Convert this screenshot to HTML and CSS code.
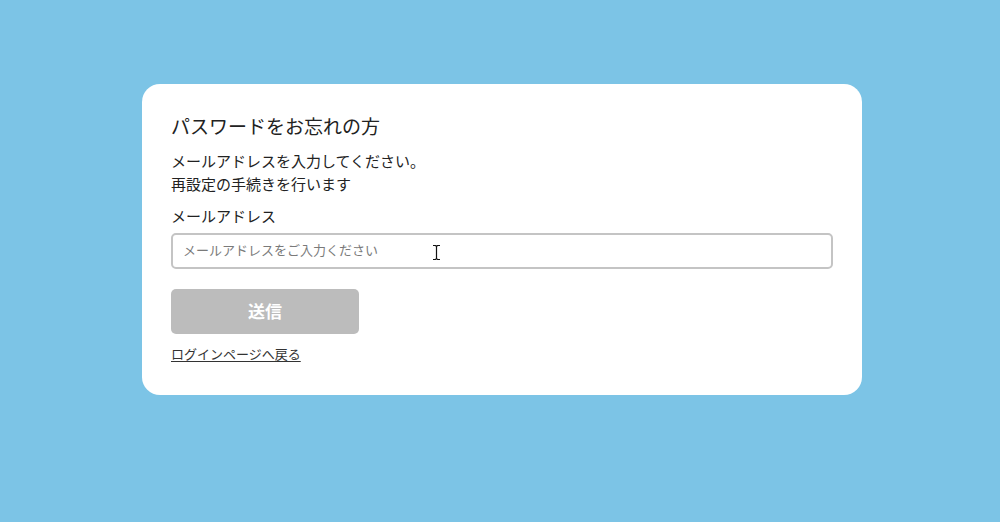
FILE: index.html
```html
<!DOCTYPE html>
<html lang="ja">
<head>
<meta charset="utf-8">
<title>パスワードをお忘れの方</title>
<link rel="stylesheet" href="styles.css">
</head>
<body>
<main class="page">
  <section class="card">
    <h1 class="title">パスワードをお忘れの方</h1>
    <p class="lead">メールアドレスを入力してください。<br>再設定の手続きを行います</p>
    <label class="label" for="email">メールアドレス</label>
    <div class="field">
      <input class="input" id="email" type="email" placeholder="メールアドレスをご入力ください">
      <svg class="cursor" width="9" height="17" viewBox="0 0 9 17" aria-hidden="true">
        <path d="M1 1.5h2.5l1 1 1-1H8M4.5 2.5v12M1 15.5h2.5l1-1 1 1H8" fill="none" stroke="#fff" stroke-width="2.6"/>
        <path d="M1 1.5h2.5l1 1 1-1H8M4.5 2.5v12M1 15.5h2.5l1-1 1 1H8" fill="none" stroke="#111" stroke-width="1.2"/>
      </svg>
    </div>
    <button class="submit" type="button">送信</button>
    <a class="back" href="#">ログインページへ戻る</a>
  </section>
</main>
</body>
</html>
```
FILE: styles.css
```css
* { box-sizing: border-box; }

html, body {
  margin: 0;
  padding: 0;
}

body {
  background: #7cc4e6;
  font-family: "Noto Sans CJK JP", "Noto Sans", sans-serif;
  color: #222;
  width: 1000px;
  height: 522px;
  overflow: hidden;
}

.page {
  display: flex;
  justify-content: center;
  padding: 84px 0 0 4px;
}

.card {
  width: 720px;
  background: #fff;
  border-radius: 18px;
  padding: 28px 29px 31px;
  display: flex;
  flex-direction: column;
  align-items: flex-start;
}

.title {
  margin: 0;
  font-size: 19px;
  line-height: 28px;
  font-weight: 400;
  color: #222;
}

.lead {
  margin: 9px 0 0;
  font-size: 15px;
  line-height: 23px;
  color: #222;
}

.label {
  margin-top: 9px;
  font-size: 15px;
  line-height: 23px;
  color: #222;
}

.field {
  position: relative;
  margin-top: 6px;
  width: 100%;
}

.input {
  display: block;
  width: 100%;
  height: 36px;
  border: 2px solid #c4c4c4;
  border-radius: 5px;
  padding: 0 10px 3px;
  font-family: inherit;
  font-size: 13px;
  color: #333;
  background: #fff;
  outline: none;
}

.input::placeholder {
  color: #7a7a7a;
}

.cursor {
  position: absolute;
  left: 261px;
  top: 11px;
}

.submit {
  margin-top: 20px;
  width: 188px;
  height: 45px;
  border: none;
  border-radius: 5px;
  background: #bcbcbc;
  color: #fff;
  font-family: inherit;
  font-size: 17px;
  font-weight: 700;
  padding: 0 0 3px;
  cursor: default;
}

.back {
  margin-top: 10px;
  font-size: 13px;
  line-height: 20px;
  color: #333;
  text-decoration: underline;
  text-underline-offset: 2px;
}
```
